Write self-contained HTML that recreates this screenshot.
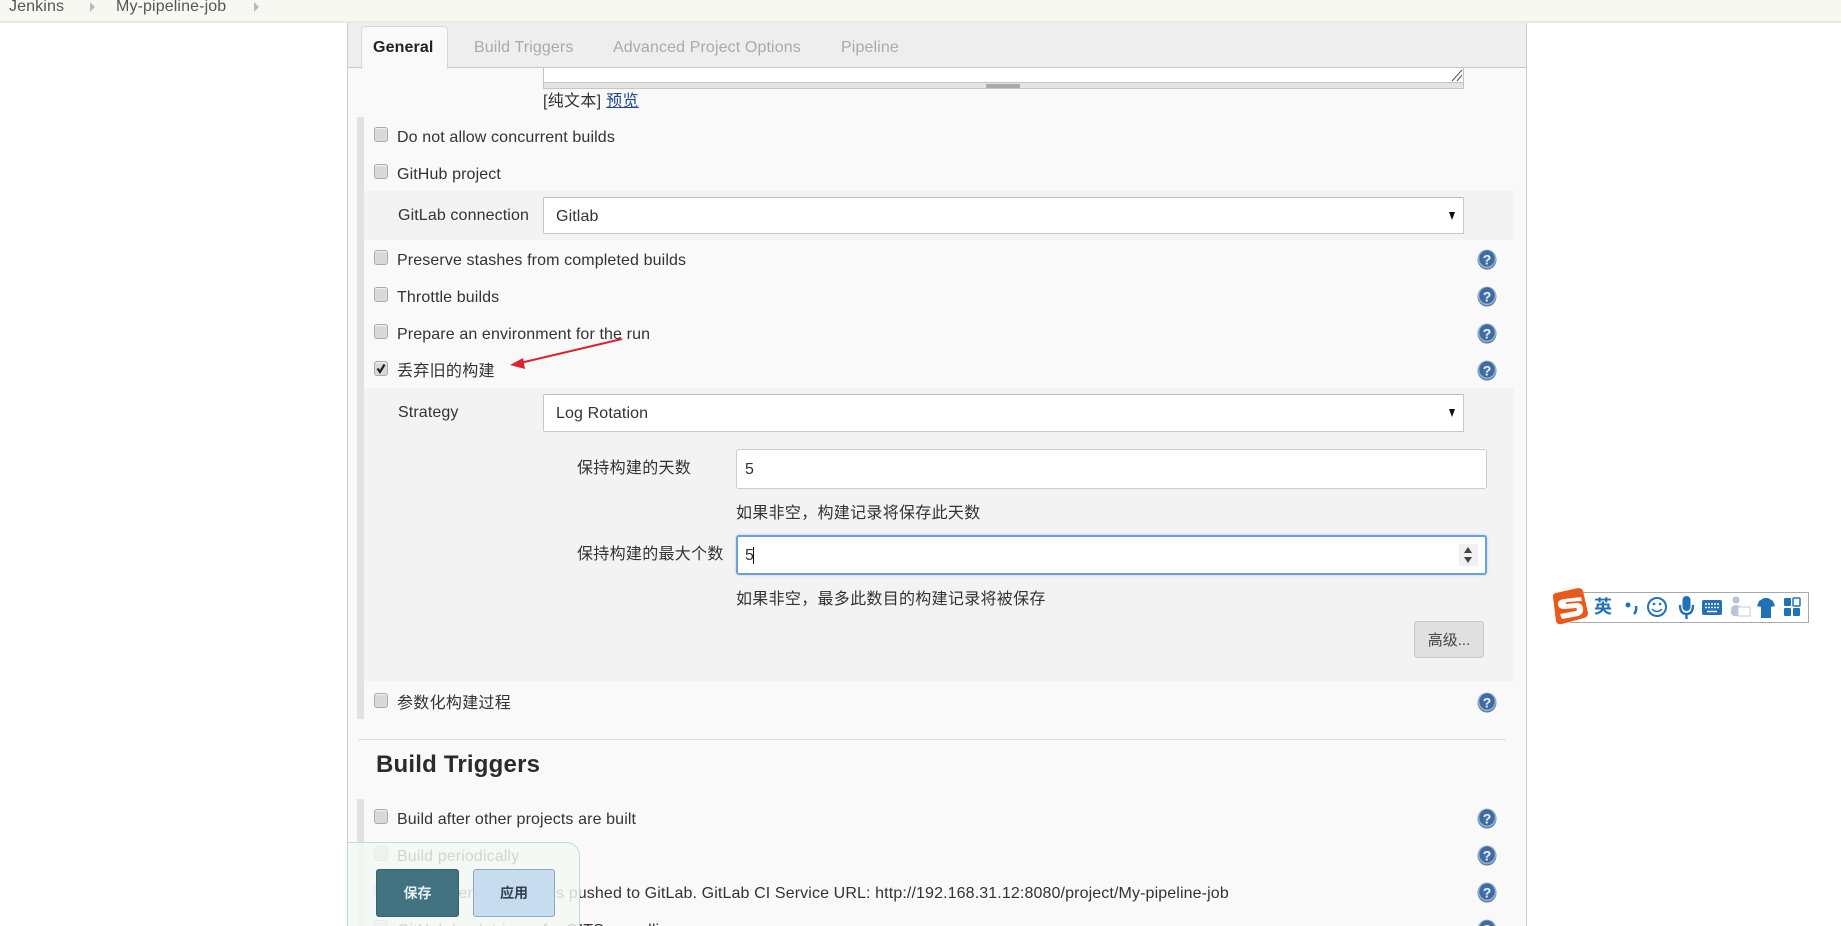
<!DOCTYPE html>
<html><head><meta charset="utf-8"><title>My-pipeline-job Config</title>
<style>
html,body{margin:0;padding:0;width:1841px;height:926px;overflow:hidden;background:#fff}
body{position:relative;font-family:"Liberation Sans","Noto Sans CJK SC",sans-serif;font-size:16px;color:#333}
.a{position:absolute;box-sizing:border-box}
.t{position:absolute;white-space:nowrap;line-height:20px;height:20px;margin-top:1px;letter-spacing:.12px}
.c{letter-spacing:.3px}
.cb{position:absolute;box-sizing:border-box;left:374px;width:14px;height:15px;background:#d9d9d9;border:1px solid #a9a9a9;border-radius:3px;box-shadow:inset 0 1px 1px #f4f4f4}
.sel{position:absolute;box-sizing:border-box;left:543px;width:921px;background:#fff;border:1px solid #c8c8c8;border-top-color:#bdbdbd;border-radius:2px 0 0 2px}
.tri{position:absolute;left:1449px;width:0;height:0;border-left:3.5px solid transparent;border-right:3.5px solid transparent;border-top:8px solid #111}
.inp{position:absolute;box-sizing:border-box;left:736px;width:751px;height:40px;background:#fff;border:1px solid #ccc;border-radius:3px}
.h{position:absolute;left:1477px;width:20px;height:21px}
</style></head><body>
<svg width="0" height="0" style="position:absolute"><defs>
<radialGradient id="g" cx="50%" cy="45%" r="52%"><stop offset="0" stop-color="#4a77ad"/><stop offset=".72" stop-color="#3a689f"/><stop offset=".85" stop-color="#a9bed8"/><stop offset="1" stop-color="#51719c"/></radialGradient>
</defs></svg>

<div class="a" style="left:0;top:0;width:1841px;height:23px;background:#f8f8f3;border-bottom:2px solid #e9e9dc"></div>
<div class="t" style="left:9px;top:-4px;color:#555">Jenkins</div>
<div class="a" style="left:90px;top:2px;width:0;height:0;border-left:5px solid #bbb;border-top:5px solid transparent;border-bottom:5px solid transparent"></div>
<div class="t" style="left:116px;top:-4px;color:#555">My-pipeline-job</div>
<div class="a" style="left:254px;top:2px;width:0;height:0;border-left:5px solid #bbb;border-top:5px solid transparent;border-bottom:5px solid transparent"></div>

<div class="a" style="left:347px;top:23px;width:1180px;height:903px;background:#f9f9f9;border-left:1px solid #ccc;border-right:1px solid #ccc"></div>
<div class="a" style="left:348px;top:23px;width:1178px;height:45px;background:#eee;border-bottom:1px solid #c8c8c8"></div>
<div class="a" style="left:361px;top:26px;width:87px;height:43px;background:#f9f9f9;border:1px solid #d8d8d8;border-bottom:none;border-radius:4px 4px 0 0"></div>
<div class="t" style="left:373px;top:37px;font-weight:bold;color:#222">General</div>
<div class="t" style="left:474px;top:37px;color:#aaa">Build Triggers</div>
<div class="t" style="left:613px;top:37px;color:#aaa">Advanced Project Options</div>
<div class="t" style="left:841px;top:37px;color:#aaa">Pipeline</div>

<div class="a" style="left:543px;top:68px;width:921px;height:15px;background:#fff;border:1px solid #c4c4c4;border-top:none"></div>
<div class="a" style="left:543px;top:83px;width:921px;height:6px;background:#e4e4e4;border:1px solid #c4c4c4;border-top:none"></div>
<div class="a" style="left:986px;top:84px;width:34px;height:4px;background:#aaa"></div>
<svg class="a" style="left:1450px;top:68px" width="14" height="14"><path d="M2 13L12 2M7 13L12 7" stroke="#555" stroke-width="1" fill="none"/></svg>
<div class="t c" style="left:543px;top:91px;color:#333">[纯文本] <span style="color:#204a87;text-decoration:underline">预览</span></div>

<div class="a" style="left:357px;top:117px;width:7px;height:602px;background:#e2e2e2"></div>
<div class="a" style="left:364px;top:191px;width:1150px;height:49px;background:#f3f3f3"></div>
<div class="a" style="left:364px;top:388px;width:1150px;height:293px;background:#f3f3f3"></div>

<div class="cb" style="top:127px"></div><div class="t" style="left:397px;top:127px">Do not allow concurrent builds</div>
<div class="cb" style="top:164px"></div><div class="t" style="left:397px;top:164px">GitHub project</div>
<div class="t" style="left:398px;top:205px">GitLab connection</div>
<div class="sel" style="top:197px;height:37px"></div><div class="t" style="left:556px;top:206px">Gitlab</div><div class="tri" style="top:212px"></div>
<div class="cb" style="top:250px"></div><div class="t" style="left:397px;top:250px">Preserve stashes from completed builds</div>
<div class="cb" style="top:287px"></div><div class="t" style="left:397px;top:287px">Throttle builds</div>
<div class="cb" style="top:324px"></div><div class="t" style="left:397px;top:324px">Prepare an environment for the run</div>
<div class="cb" style="top:361px"></div>
<svg class="a" style="left:374px;top:361px" width="14" height="15"><path d="M3.5 7.5L6 11L10.5 3.5" stroke="#222" stroke-width="2.2" fill="none"/></svg>
<div class="t c" style="left:397px;top:361px">丢弃旧的构建</div>

<svg class="a" style="left:500px;top:330px" width="130" height="45"><path d="M122 9L20 33" stroke="#dc2430" stroke-width="2" fill="none"/><path d="M10 35L23 28L25 39Z" fill="#dc2430"/></svg>

<div class="t" style="left:398px;top:402px">Strategy</div>
<div class="sel" style="top:394px;height:38px"></div><div class="t" style="left:556px;top:403px">Log Rotation</div><div class="tri" style="top:409px"></div>

<div class="t c" style="left:577px;top:458px">保持构建的天数</div>
<div class="inp" style="top:449px"></div><div class="t" style="left:745px;top:459px">5</div>
<div class="t c" style="left:736px;top:503px">如果非空，构建记录将保存此天数</div>
<div class="t c" style="left:577px;top:544px">保持构建的最大个数</div>
<div class="inp" style="top:535px;border:2px solid #6d9fdc;box-shadow:0 0 2px #a9c7ec"></div><div class="t" style="left:745px;top:545px">5</div>
<div class="a" style="left:753px;top:547px;width:1px;height:17px;background:#111"></div>
<div class="a" style="left:1459px;top:544px;width:19px;height:22px;background:#f0f0f0"></div>
<div class="a" style="left:1464px;top:547px;width:0;height:0;border-left:4px solid transparent;border-right:4px solid transparent;border-bottom:6px solid #444"></div>
<div class="a" style="left:1464px;top:557px;width:0;height:0;border-left:4px solid transparent;border-right:4px solid transparent;border-top:6px solid #444"></div>
<div class="t c" style="left:736px;top:589px">如果非空，最多此数目的构建记录将被保存</div>
<div class="a" style="left:1414px;top:621px;width:70px;height:37px;background:#e0e0e0;border:1px solid #c8c8c8;border-radius:3px;text-align:center;line-height:38px;font-size:15px;color:#444">高级...</div>

<div class="cb" style="top:693px"></div><div class="t c" style="left:397px;top:693px">参数化构建过程</div>

<div class="a" style="left:358px;top:739px;width:1148px;height:1px;background:#ddd"></div>
<div class="t" style="left:376px;top:749px;font-size:24px;font-weight:bold;line-height:30px;height:30px;color:#2b2b2b;letter-spacing:.2px">Build Triggers</div>

<div class="a" style="left:357px;top:799px;width:7px;height:127px;background:#e2e2e2"></div>
<div class="cb" style="top:809px"></div><div class="t" style="left:397px;top:809px">Build after other projects are built</div>
<div class="cb" style="top:846px"></div><div class="t" style="left:397px;top:846px">Build periodically</div>
<div class="cb" style="top:883px"></div><div class="t" style="left:397px;top:883px">Build when a change is pushed to GitLab. GitLab CI Service URL: http://192.168.31.12:8080/project/My-pipeline-job</div>
<div class="cb" style="top:920px"></div><div class="t" style="left:397px;top:920px">GitHub hook trigger for GITScm polling</div>

<svg class="h" style="top:249px" viewBox="0 0 20 21"><ellipse cx="10" cy="10.5" rx="9.5" ry="10" fill="url(#g)"/><text x="10" y="15.500" font-size="14" font-weight="bold" text-anchor="middle" fill="#eef3fa" font-family="Liberation Sans">?</text></svg>
<svg class="h" style="top:286px" viewBox="0 0 20 21"><ellipse cx="10" cy="10.5" rx="9.5" ry="10" fill="url(#g)"/><text x="10" y="15.500" font-size="14" font-weight="bold" text-anchor="middle" fill="#eef3fa" font-family="Liberation Sans">?</text></svg>
<svg class="h" style="top:323px" viewBox="0 0 20 21"><ellipse cx="10" cy="10.5" rx="9.5" ry="10" fill="url(#g)"/><text x="10" y="15.500" font-size="14" font-weight="bold" text-anchor="middle" fill="#eef3fa" font-family="Liberation Sans">?</text></svg>
<svg class="h" style="top:360px" viewBox="0 0 20 21"><ellipse cx="10" cy="10.5" rx="9.5" ry="10" fill="url(#g)"/><text x="10" y="15.500" font-size="14" font-weight="bold" text-anchor="middle" fill="#eef3fa" font-family="Liberation Sans">?</text></svg>
<svg class="h" style="top:692px" viewBox="0 0 20 21"><ellipse cx="10" cy="10.5" rx="9.5" ry="10" fill="url(#g)"/><text x="10" y="15.500" font-size="14" font-weight="bold" text-anchor="middle" fill="#eef3fa" font-family="Liberation Sans">?</text></svg>
<svg class="h" style="top:808px" viewBox="0 0 20 21"><ellipse cx="10" cy="10.5" rx="9.5" ry="10" fill="url(#g)"/><text x="10" y="15.500" font-size="14" font-weight="bold" text-anchor="middle" fill="#eef3fa" font-family="Liberation Sans">?</text></svg>
<svg class="h" style="top:845px" viewBox="0 0 20 21"><ellipse cx="10" cy="10.5" rx="9.5" ry="10" fill="url(#g)"/><text x="10" y="15.500" font-size="14" font-weight="bold" text-anchor="middle" fill="#eef3fa" font-family="Liberation Sans">?</text></svg>
<svg class="h" style="top:882px" viewBox="0 0 20 21"><ellipse cx="10" cy="10.5" rx="9.5" ry="10" fill="url(#g)"/><text x="10" y="15.500" font-size="14" font-weight="bold" text-anchor="middle" fill="#eef3fa" font-family="Liberation Sans">?</text></svg>
<svg class="h" style="top:919px" viewBox="0 0 20 21"><ellipse cx="10" cy="10.5" rx="9.5" ry="10" fill="url(#g)"/><text x="10" y="15.500" font-size="14" font-weight="bold" text-anchor="middle" fill="#eef3fa" font-family="Liberation Sans">?</text></svg>

<div class="a" style="left:347px;top:842px;width:233px;height:90px;background:rgba(244,249,244,.82);border:1px solid #c5dcc5;border-radius:0 14px 0 0"></div>
<div class="a" style="left:376px;top:869px;width:83px;height:48px;background:#42717f;border:1px solid #35606e;border-radius:3px;color:#e6f0f3;font-weight:bold;font-size:14px;text-align:center;line-height:46px">保存</div>
<div class="a" style="left:473px;top:869px;width:82px;height:48px;background:#c8dcf0;border:1px solid #8fa9c0;border-radius:3px;color:#33424f;font-weight:bold;font-size:14px;text-align:center;line-height:46px">应用</div>

<div class="a" style="left:1570px;top:592px;width:239px;height:31px;background:#fff;border:1px solid #a9a9a9"></div>
<svg class="a" style="left:1551px;top:588px" width="38" height="37" viewBox="0 0 38 37"><path d="M2 9Q1 6 5 5L27 0Q31 0 32 3L37 25Q37 29 33 30L11 36Q6 37 5 33Z" fill="#e9591c"/><path d="M30 9L13 11Q6 12 7 17Q8 21 13 21L25 20Q27 21 25 23L9 26L11 31L27 28Q33 26 32 20Q31 15 26 15L15 16Q14 15 16 14L31 13Z" fill="#fff"/></svg>
<div class="t" style="left:1594px;top:596px;color:#2271b8;font-weight:bold;font-size:18px;letter-spacing:0">英</div>
<svg class="a" style="left:1620px;top:592px" width="190" height="31" viewBox="0 0 190 31">
<circle cx="8" cy="13" r="2.5" fill="#2271b8"/><path d="M16 14Q17 19 14 22" stroke="#2271b8" stroke-width="2.5" fill="none"/>
<circle cx="37" cy="15" r="9" fill="none" stroke="#2271b8" stroke-width="2"/><circle cx="34" cy="12" r="1.3" fill="#2271b8"/><circle cx="40" cy="12" r="1.3" fill="#2271b8"/><path d="M32 17Q37 22 42 17" stroke="#2271b8" stroke-width="1.5" fill="none"/>
<rect x="62.500" y="4" width="8" height="15" rx="4" fill="#2271b8"/><path d="M60 13Q60 22 66.5 22Q73 22 73 13M66.5 22V27" stroke="#2271b8" stroke-width="2.400" fill="none"/>
<rect x="82" y="8" width="20" height="15" rx="2" fill="#2271b8"/><path d="M85 12H99M85 15.500H99" stroke="#fff" stroke-width="1.600" stroke-dasharray="2 1"/><path d="M87 19.500H97" stroke="#fff" stroke-width="1.500"/>
<circle cx="116" cy="8" r="3.500" fill="#b9c3d4"/><path d="M111 22Q110 13 116 13L120 14V24H114Z" fill="#b9c3d4"/><rect x="118" y="15" width="12" height="9" fill="#fff" stroke="#c4ccd9"/>
<path d="M139 9L144 6H148L153 9L155 14L151 15V26H141V15L137 14Z" fill="#2271b8"/>
<rect x="164" y="6" width="7" height="8" rx="1" fill="#2271b8"/><rect x="173" y="6" width="7" height="8" rx="1" fill="none" stroke="#2271b8" stroke-width="1.500"/><rect x="164" y="16" width="7" height="8" rx="1" fill="#2271b8"/><rect x="173" y="16" width="7" height="8" rx="1" fill="#2271b8"/>
</svg>
</body></html>
